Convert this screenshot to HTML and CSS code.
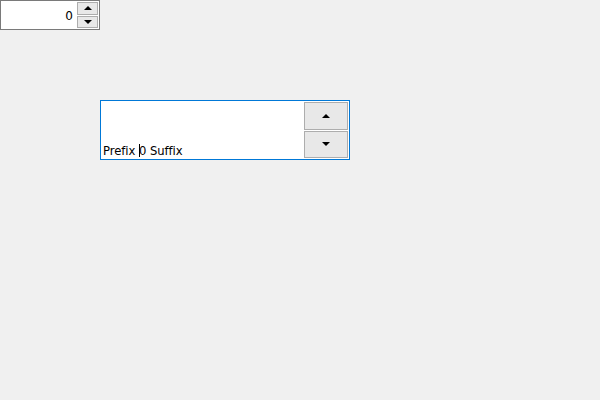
FILE: index.html
```html
<!DOCTYPE html>
<html>
<head>
<meta charset="utf-8">
<link rel="stylesheet" href="styles.css">
</head>
<body>
<div class="page">
  <div class="spin small">
    <div class="field small-field"><span class="val">0</span></div>
    <div class="btns small-btns">
      <div class="btn"><span class="tri up"></span></div>
      <div class="btn"><span class="tri down"></span></div>
    </div>
  </div>
  <div class="spin big">
    <div class="field big-field"><span class="txt">Prefix <span class="caret"></span>0 Suffix</span></div>
    <div class="btns big-btns">
      <div class="btn"><span class="tri up"></span></div>
      <div class="btn"><span class="tri down"></span></div>
    </div>
  </div>
</div>
</body>
</html>
```
FILE: styles.css
```css
html, body { margin: 0; padding: 0; background: #f0f0f0; }
body { width: 600px; height: 400px; font-family: "DejaVu Sans", sans-serif; font-size: 12px; color: #000; }
.page { display: flex; flex-direction: column; align-items: flex-start; }
.spin { display: flex; background: #fff; box-sizing: border-box; }
.small { width: 100px; height: 30px; border: 1px solid #7a7a7a; padding: 1px 1px 1px 0; }
.big { width: 250px; height: 60px; border: 1px solid #0078d7; margin: 70px 0 0 100px; padding: 1px 1px 1px 0; }
.field { flex: 1; display: flex; }
.small-field { justify-content: flex-end; align-items: center; padding-right: 4px; padding-top: 2px; color: #000; }
.big-field { align-items: flex-end; padding-left: 2px; padding-bottom: 0; }
.txt { line-height: 13px; font-size: 11.6px; letter-spacing: -0.05px; }
.caret { display: inline-block; width: 1px; height: 13px; background: #000; vertical-align: -2px; margin-right: -1px; }
.btns { display: flex; flex-direction: column; gap: 1px; }
.small-btns { width: 21px; }
.big-btns { width: 44px; }
.btn { flex: 1; background: #e8e8e8; border: 1px solid #adadad; display: flex; align-items: center; justify-content: center; box-sizing: border-box; }
.tri { width: 0; height: 0; border-left: 4px solid transparent; border-right: 4px solid transparent; }
.tri.up { border-bottom: 4px solid #000; }
.tri.down { border-top: 4px solid #000; }
```
